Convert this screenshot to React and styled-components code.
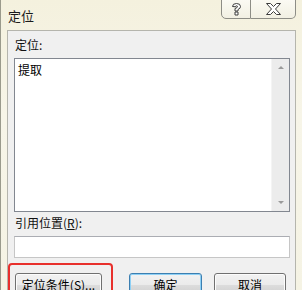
import React from 'react';
import styled, { createGlobalStyle } from 'styled-components';

const GlobalStyle = createGlobalStyle`
  html, body {
    margin: 0;
    padding: 0;
    background: #f6f4e4;
  }
  body {
    font-family: "Noto Sans CJK SC", "DejaVu Sans", sans-serif;
    font-size: 12px;
    color: #000;
  }
`;

const Window = styled.div`
  width: 302px;
  height: 290px;
  overflow: hidden;
  box-sizing: border-box;
  border-left: 1px solid #9a9a8c;
  background: linear-gradient(180deg, #f4f1de 0%, #f7f5e8 40%, #f5f3e4 100%);
  display: flex;
  flex-direction: column;
`;

const TitleBar = styled.div`
  height: 30px;
  display: flex;
  align-items: flex-start;
  justify-content: space-between;
  padding-left: 7px;
  padding-right: 6px;
  flex-shrink: 0;
`;

const Title = styled.span`
  font-size: 13px;
  line-height: 15px;
  margin-top: 8px;
  color: #1a1a1a;
`;

const Caption = styled.div`
  display: flex;
  margin-top: -1px;
`;

const CaptionButton = styled.div`
  width: ${p => p.$w}px;
  height: 20px;
  box-sizing: border-box;
  border: 1px solid #8d8d86;
  border-left: ${p => (p.$first ? '1px solid #8d8d86' : 'none')};
  border-radius: ${p => (p.$first ? '0 0 0 5px' : '0 0 5px 0')};
  background: linear-gradient(180deg, #fbfaf3 0%, #f2f0e3 100%);
  display: flex;
  align-items: center;
  justify-content: center;
`;

const Client = styled.div`
  flex: 1;
  margin: 0 6px 0 6px;
  background: #f0f0f0;
  border: 1px solid #b5b5ad;
  border-bottom: none;
  padding: 0 5px 0 6px;
  display: flex;
  flex-direction: column;
`;

const Label = styled.div`
  line-height: 14px;
  height: 14px;
  margin-top: ${p => p.$top}px;
  padding-left: 1px;
  color: #111;
`;

const ListBox = styled.div`
  margin-top: 6px;
  height: 154px;
  box-sizing: border-box;
  border: 1px solid #828790;
  background: #fff;
  display: flex;
`;

const ListItems = styled.div`
  flex: 1;
  padding: 3px 0 0 3px;
  line-height: 16px;
`;

const ScrollBar = styled.div`
  width: 17px;
  background: #ececec;
  border-left: 1px solid #f4f4f4;
  display: flex;
  flex-direction: column;
  justify-content: space-between;
  align-items: center;
  padding: 7px 0;
`;

const Arrow = styled.div`
  width: 0;
  height: 0;
  border-left: 3px solid transparent;
  border-right: 3px solid transparent;
  ${p => (p.$up ? 'border-bottom: 3px solid #9a9a9a;' : 'border-top: 3px solid #9a9a9a;')}
`;

const Input = styled.div`
  margin-top: 6px;
  height: 22px;
  box-sizing: border-box;
  border: 1px solid #c6c6c6;
  border-top-color: #abadb3;
  background: #fff;
`;

const ButtonRow = styled.div`
  display: flex;
  align-items: flex-start;
  margin-top: 5px;
  margin-left: -6px;
`;

const Highlight = styled.div`
  border: 2px solid #e8302c;
  border-radius: 4px;
  padding: 8px 9px 0 5px;
  height: 40px;
`;

const Button = styled.div`
  width: ${p => p.$w}px;
  height: 23px;
  box-sizing: border-box;
  margin-left: ${p => p.$ml || 0}px;
  margin-top: ${p => p.$mt || 0}px;
  border: 1px solid ${p => (p.$default ? '#3c7fb1' : '#707070')};
  border-radius: 3px;
  background: linear-gradient(180deg, #f2f2f2 0%, #ebebeb 50%, #dddddd 51%, #cfcfcf 100%);
  box-shadow: ${p => (p.$default ? 'inset 0 0 0 1px #8ed0f5' : 'inset 0 0 0 1px #fcfcfc')};
  display: flex;
  align-items: center;
  justify-content: center;
  color: #000;
`;

const U = styled.span`
  text-decoration: underline;
`;

const HelpIcon = () => (
  <svg width="11" height="13" viewBox="0 0 11 13">
    <path
      d="M1.5 3.5 Q1.5 0.5 5.5 0.5 Q9.5 0.5 9.5 3.5 Q9.5 5.5 7 6.5 L7 8 L4 8 L4 5.5 Q6.5 4.8 6.5 3.6 Q6.5 2.8 5.5 2.8 Q4.5 2.8 4.5 3.8 Z M4 9 L7 9 L7 12 L4 12 Z"
      fill="#fff"
      stroke="#3c3c3c"
      strokeWidth="1"
      strokeLinejoin="round"
    />
  </svg>
);

const CloseIcon = () => (
  <svg width="15" height="12" viewBox="0 0 15 12">
    <path
      d="M0.5 0.5 L4.5 0.5 L7.5 3.5 L10.5 0.5 L14.5 0.5 L9.5 6 L14.5 11.5 L10.5 11.5 L7.5 8.5 L4.5 11.5 L0.5 11.5 L5.5 6 Z"
      fill="#fff"
      stroke="#3c3c3c"
      strokeWidth="1"
      strokeLinejoin="round"
    />
  </svg>
);

export default function App() {
  return (
    <>
      <GlobalStyle />
      <Window>
        <TitleBar>
          <Title>定位</Title>
          <Caption>
            <CaptionButton $w={30} $first>
              <HelpIcon />
            </CaptionButton>
            <CaptionButton $w={45}>
              <CloseIcon />
            </CaptionButton>
          </Caption>
        </TitleBar>
        <Client>
          <Label $top={7}>定位:</Label>
          <ListBox>
            <ListItems>提取</ListItems>
            <ScrollBar>
              <Arrow $up />
              <Arrow />
            </ScrollBar>
          </ListBox>
          <Label $top={4}>
            引用位置(<U>R</U>):
          </Label>
          <Input />
          <ButtonRow>
            <Highlight>
              <Button $w={87}>
                定位条件(<U>S</U>)...
              </Button>
            </Highlight>
            <Button $w={73} $ml={16} $mt={10} $default>
              确定
            </Button>
            <Button $w={72} $ml={12} $mt={10}>
              取消
            </Button>
          </ButtonRow>
        </Client>
      </Window>
    </>
  );
}
